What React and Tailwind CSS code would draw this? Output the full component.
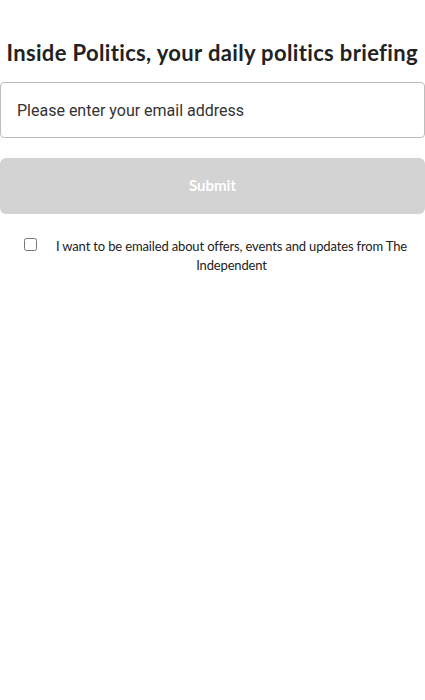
export default function App() {
  return (
    <div className="w-[425px] min-h-[700px] bg-white overflow-hidden">
      <div className="pt-[38px] flex justify-end overflow-hidden pr-[7px]">
        <h2 className="whitespace-nowrap text-[22px] leading-[30px] font-bold tracking-[0.35px] text-[#222] font-['Lato',sans-serif]">
          Sign up to Inside Politics, your daily politics briefing
        </h2>
      </div>
      <form className="mt-[14px] flex flex-col" onSubmit={(e) => e.preventDefault()}>
        <input
          type="email"
          placeholder="Please enter your email address"
          className="h-[56px] w-full rounded-[4px] border border-[#bdbdbd] px-4 text-[16px] text-[#333] placeholder:text-[#333] font-['Roboto',sans-serif] outline-none"
        />
        <button
          type="submit"
          disabled
          className="mt-[20px] h-[56px] w-full rounded-[6px] bg-[#d3d3d3] pb-[2px] text-white text-[15px] font-bold font-['Lato',sans-serif]"
        >
          Submit
        </button>
        <label className="mt-[23px] flex items-start pl-[24px] pr-[14px]">
          <input type="checkbox" className="mt-[1px] h-[13px] w-[13px] shrink-0" />
          <span className="ml-[15px] flex-1 text-center text-[13px] leading-[19px] tracking-[-0.15px] text-[#222] font-['Lato',sans-serif]">
            I want to be emailed about offers, events and updates from The Independent
          </span>
        </label>
      </form>
    </div>
  );
}
